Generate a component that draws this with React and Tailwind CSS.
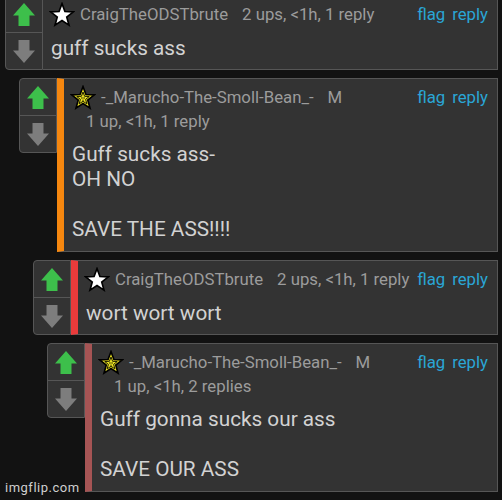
import React from "react";

const STAR =
  "12,1.5 14.7,8.78 22.46,9.1 16.37,13.92 18.47,21.4 12,17.1 5.53,21.4 7.63,13.92 1.54,9.1 9.3,8.78";
const INNER_STAR =
  "12,6.45 13.49,10.45 17.75,10.63 14.4,13.28 15.56,17.4 12,15.03 8.44,17.4 9.6,13.28 6.25,10.63 10.52,10.45";

function Star({ gold }) {
  return (
    <svg width="26" height="26" viewBox="0 0 24 24" className="-ml-[2px] shrink-0">
      <polygon
        points={STAR}
        fill={gold ? "#ece323" : "#ffffff"}
        stroke="#000000"
        strokeWidth="1.5"
        strokeLinejoin="miter"
      />
      {gold && (
        <>
          <polygon points={INNER_STAR} fill="none" stroke="#1a1a00" strokeWidth="0.9" />
          <circle cx="11" cy="11.9" r="0.7" fill="#1a1a00" />
          <circle cx="13" cy="11.9" r="0.7" fill="#1a1a00" />
          <circle cx="12" cy="14" r="0.6" fill="#1a1a00" />
        </>
      )}
    </svg>
  );
}

function Arrow({ up }) {
  return (
    <svg
      width="22"
      height="23"
      viewBox="0 0 22 23"
      className={up ? "" : "rotate-180"}
    >
      <path
        d="M11 0 L22 12.5 L16.5 12.5 L16.5 23 L5.5 23 L5.5 12.5 L0 12.5 Z"
        fill={up ? "#3dbf4b" : "#7d7d7d"}
      />
    </svg>
  );
}

function VoteBox() {
  return (
    <div className="w-[38px] shrink-0 rounded-l-[4px] border border-[#565656] bg-[#333333]">
      <div className="flex h-[37px] items-center justify-center border-b border-[#565656]">
        <Arrow up />
      </div>
      <div className="flex h-[36px] items-center justify-center">
        <Arrow />
      </div>
    </div>
  );
}

function Comment({ indent, bar, name, gold, mod, meta, metaBelow, body }) {
  return (
    <div className={`flex items-start mr-[4px] ${indent}`}>
      <VoteBox />
      <div
        className={`min-h-[75px] flex-1 border border-[#565656] bg-[#333333] pl-[8px] pr-[9px] pt-[4px] ${
          metaBelow ? "pb-[9px]" : "pb-[7px]"
        } ${bar}`}
      >
        <div className="flex h-[30px] items-center whitespace-nowrap text-[16.75px] text-[#9c9c9c]">
          <Star gold={gold} />
          <span className="ml-[5px]">{name}</span>
          {mod && <span className="ml-[14px]">M</span>}
          {!metaBelow && <span className="ml-[14px]">{meta}</span>}
          <span className="ml-auto text-[#2aa6d6]">flag</span>
          <span className="ml-[7px] text-[#2aa6d6]">reply</span>
        </div>
        {metaBelow && (
          <div className="-mt-[2px] mb-[11px] pl-[14px] text-[16.75px] leading-[20px] text-[#9c9c9c]">
            {meta}
          </div>
        )}
        <div className="mt-[6px] whitespace-pre-line text-[20.75px] leading-[25px] text-[#d2d2d2]">
          {body}
        </div>
      </div>
    </div>
  );
}

export default function App() {
  return (
    <div className="relative h-[500px] w-[502px] overflow-hidden bg-[#121212] font-['Roboto',sans-serif]">
      <div className="-mt-[5px] flex flex-col gap-[8px]">
        <Comment
          indent="ml-[5px]"
          bar="border-l-0"
          name="CraigTheODSTbrute"
          meta="2 ups, <1h, 1 reply"
          body="guff sucks ass"
        />
        <Comment
          indent="ml-[19px]"
          bar="border-l-[7px] border-l-[#f6870f]"
          name="-_Marucho-The-Smoll-Bean_-"
          gold
          mod
          meta="1 up, <1h, 1 reply"
          metaBelow
          body={"Guff sucks ass-\nOH NO\n\nSAVE THE ASS!!!!"}
        />
        <Comment
          indent="ml-[33px]"
          bar="border-l-[7px] border-l-[#e93b3b]"
          name="CraigTheODSTbrute"
          meta="2 ups, <1h, 1 reply"
          body="wort wort wort"
        />
        <Comment
          indent="ml-[47px]"
          bar="border-l-[7px] border-l-[#a65454]"
          name="-_Marucho-The-Smoll-Bean_-"
          gold
          mod
          meta="1 up, <1h, 2 replies"
          metaBelow
          body={"Guff gonna sucks our ass\n\nSAVE OUR ASS"}
        />
        <div className="ml-[61px] mr-[4px] flex items-start">
          <div className="h-[75px] w-[38px] shrink-0 rounded-l-[4px] border border-[#565656] bg-[#333333]" />
          <div className="h-[75px] flex-1 border border-l-[7px] border-[#565656] border-l-[#e93b3b] bg-[#333333]" />
        </div>
      </div>
      <div className="absolute bottom-[3px] left-[5px] text-[13px] tracking-[0.5px] text-[#cfcfcf]">
        imgflip.com
      </div>
    </div>
  );
}
